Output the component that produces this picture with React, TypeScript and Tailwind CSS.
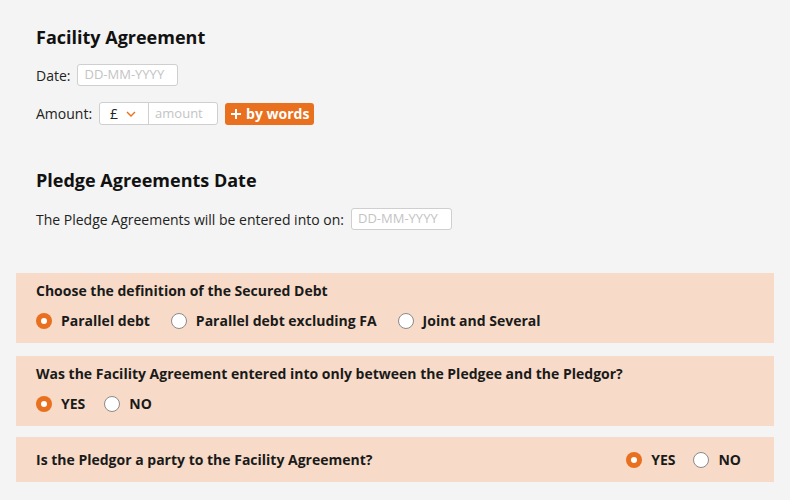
import React from 'react';

function Radio({ label, checked }: { label: string; checked?: boolean }) {
  return (
    <label className="flex items-center gap-[9px] text-[14px] font-bold text-[#1a1a1a]">
      {checked ? (
        <span className="w-[16px] h-[16px] rounded-full bg-[#e8701f] flex items-center justify-center">
          <span className="w-[6px] h-[6px] rounded-full bg-white" />
        </span>
      ) : (
        <span className="w-[16px] h-[16px] rounded-full bg-white border border-[#8a8a8a]" />
      )}
      {label}
    </label>
  );
}

function DateInput() {
  return (
    <span className="inline-flex items-center h-[22px] w-[101px] px-[6px] border border-[#cfcfcf] rounded-[3px] bg-white text-[13px] text-[#c4c4c4]">
      DD-MM-YYYY
    </span>
  );
}

export default function App() {
  return (
    <div
      className="min-h-[500px] bg-[#f3f4f3] px-[16px] pt-[24px] text-[#222]"
      style={{ fontFamily: '"Open Sans", "Liberation Sans", sans-serif' }}
    >
      <div className="px-[20px]">
        <h2 className="text-[18px] font-bold text-[#111] leading-[26px]">Facility Agreement</h2>
        <div className="mt-[14px] flex items-center gap-[7px] text-[14px]">
          <span>Date:</span>
          <DateInput />
        </div>
        <div className="mt-[16px] flex items-center text-[14px]">
          <span className="mr-[7px]">Amount:</span>
          <span className="flex h-[23px] border border-[#cfcfcf] rounded-[3px] bg-white">
            <span className="flex items-center gap-[8px] w-[49px] pl-[10px] border-r border-[#cfcfcf] text-[14px] text-[#222]">
              £
              <svg width="10" height="6" viewBox="0 0 10 6" fill="none">
                <path d="M1 1l4 4 4-4" stroke="#e8701f" strokeWidth="1.4" />
              </svg>
            </span>
            <span className="flex items-center w-[68px] pl-[6px] text-[13px] text-[#c4c4c4]">amount</span>
          </span>
          <button className="ml-[7px] flex items-center gap-[4px] h-[22px] px-[5px] rounded-[3px] bg-[#e8701f] text-white text-[14px] font-bold">
            <svg width="12" height="12" viewBox="0 0 12 12">
              <path d="M6 1v10M1 6h10" stroke="white" strokeWidth="2" />
            </svg>
            by words
          </button>
        </div>

        <h2 className="mt-[42px] text-[18px] font-bold text-[#111] leading-[26px]">Pledge Agreements Date</h2>
        <div className="mt-[15px] flex items-center gap-[7px] text-[14px]">
          <span>The Pledge Agreements will be entered into on:</span>
          <DateInput />
        </div>
      </div>

      <div className="mt-[43px] flex flex-col">
        <div className="bg-[#f7dbc8] px-[20px] pt-[8px] h-[70px]">
          <p className="text-[14px] font-bold text-[#1a1a1a] leading-[20px]">Choose the definition of the Secured Debt</p>
          <div className="mt-[9px] flex items-center gap-[21px]">
            <Radio label="Parallel debt" checked />
            <Radio label="Parallel debt excluding FA" />
            <Radio label="Joint and Several" />
          </div>
        </div>
        <div className="mt-[13px] bg-[#f7dbc8] px-[20px] pt-[8px] h-[70px]">
          <p className="text-[14px] font-bold text-[#1a1a1a] leading-[20px]">
            Was the Facility Agreement entered into only between the Pledgee and the Pledgor?
          </p>
          <div className="mt-[9px] flex items-center gap-[19px]">
            <Radio label="YES" checked />
            <Radio label="NO" />
          </div>
        </div>
        <div className="mt-[11px] bg-[#f7dbc8] pl-[20px] pr-[33px] h-[45px] flex items-center justify-between">
          <p className="text-[14px] font-bold text-[#1a1a1a]">Is the Pledgor a party to the Facility Agreement?</p>
          <div className="flex items-center gap-[18px]">
            <Radio label="YES" checked />
            <Radio label="NO" />
          </div>
        </div>
      </div>
    </div>
  );
}
